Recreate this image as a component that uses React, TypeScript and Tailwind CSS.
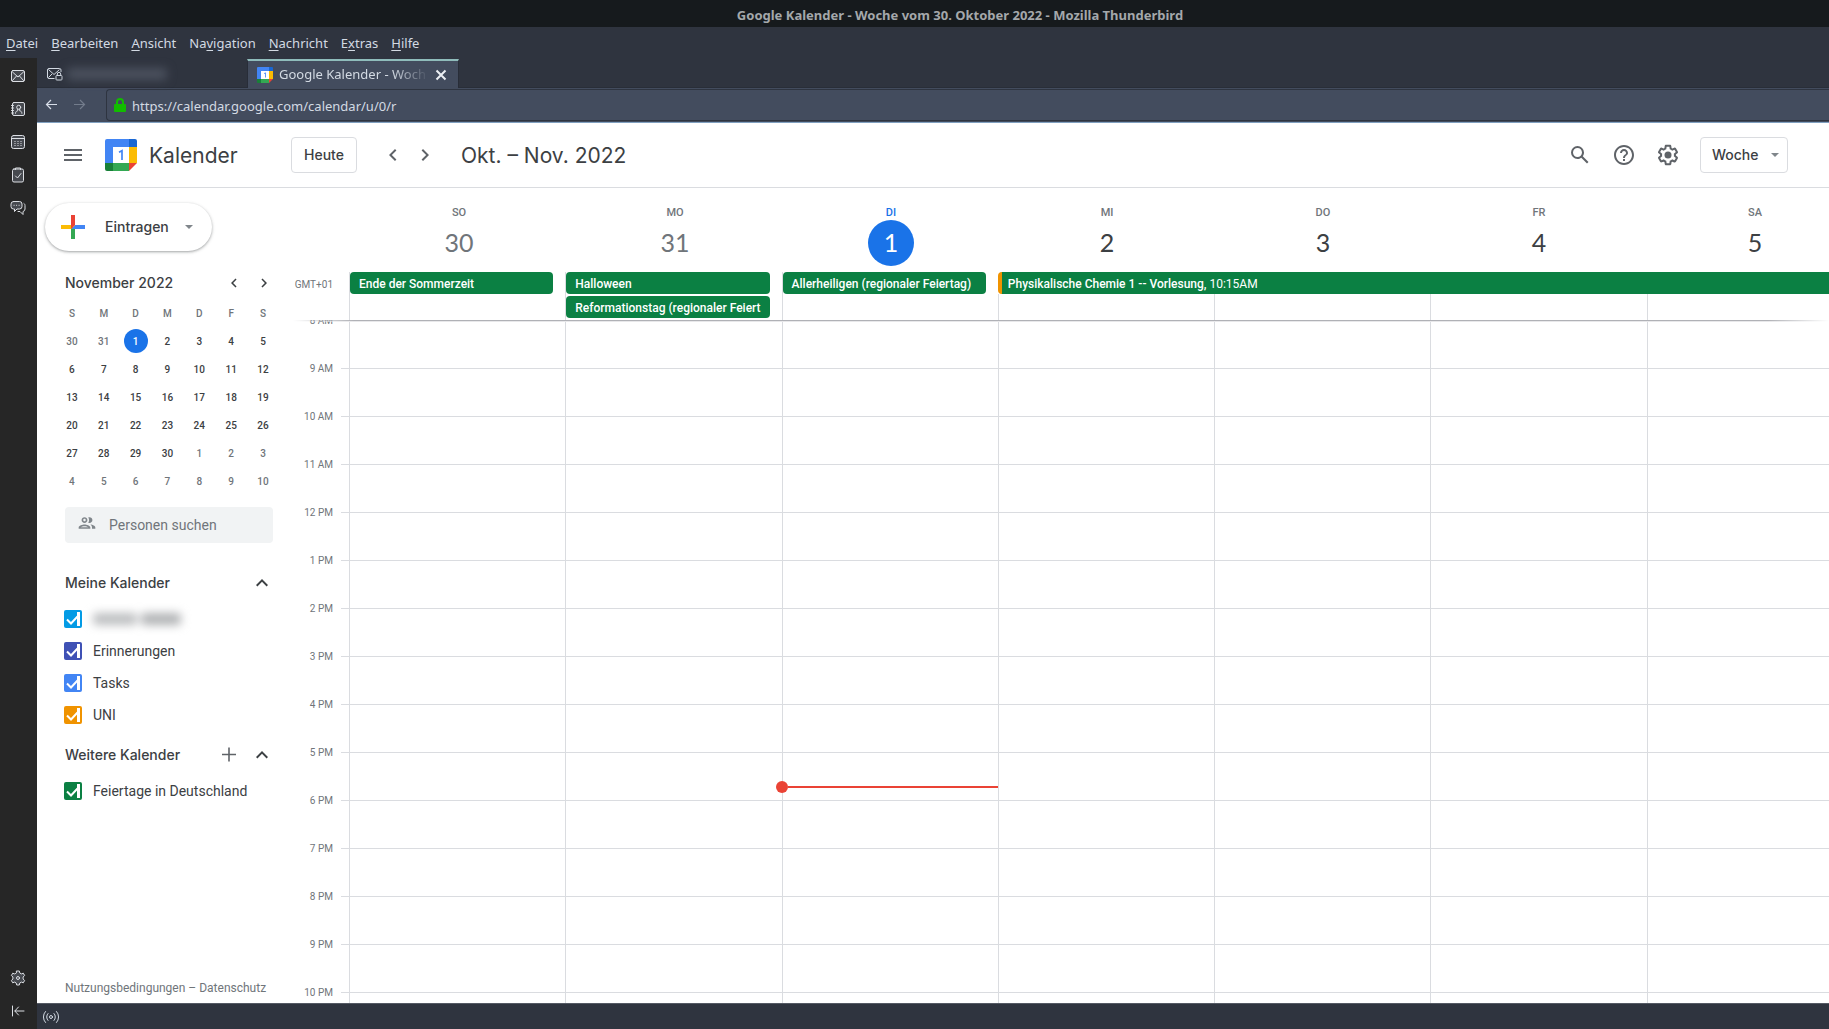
import React from "react";

const gs = "font-['Inter','Roboto',sans-serif]";

const MENU: [string, number][] = [["Datei", 0], ["Bearbeiten", 0], ["Ansicht", 0], ["Navigation", 2], ["Nachricht", 0], ["Extras", 1], ["Hilfe", 0]];

const DAYS: { name: string; date: number; state: "past" | "today" | "future" }[] = [
  { name: "SO", date: 30, state: "past" },
  { name: "MO", date: 31, state: "past" },
  { name: "DI", date: 1, state: "today" },
  { name: "MI", date: 2, state: "future" },
  { name: "DO", date: 3, state: "future" },
  { name: "FR", date: 4, state: "future" },
  { name: "SA", date: 5, state: "future" },
];

const HOURS = ["8 AM", "9 AM", "10 AM", "11 AM", "12 PM", "1 PM", "2 PM", "3 PM", "4 PM", "5 PM", "6 PM", "7 PM", "8 PM", "9 PM", "10 PM"];

const MINI = [
  [30, 31, 1, 2, 3, 4, 5],
  [6, 7, 8, 9, 10, 11, 12],
  [13, 14, 15, 16, 17, 18, 19],
  [20, 21, 22, 23, 24, 25, 26],
  [27, 28, 29, 30, 1, 2, 3],
  [4, 5, 6, 7, 8, 9, 10],
];

function CalendarLogo({ className }: { className: string }) {
  return (
    <svg viewBox="0 0 32 32" className={className} aria-hidden="true">
      <path d="M2 0h22v8H8v16H0V2a2 2 0 0 1 2-2z" fill="#4285f4" />
      <path d="M24 0h6a2 2 0 0 1 2 2v6h-8z" fill="#1967d2" />
      <path d="M24 8h8v16h-8z" fill="#fbbc04" />
      <path d="M8 24h16v8H8z" fill="#34a853" />
      <path d="M0 24h8v8H2a2 2 0 0 1-2-2z" fill="#188038" />
      <path d="M24 24h8l-8 8z" fill="#ea4335" />
      <path d="M8 8h16v16H8z" fill="#fff" />
      <path d="M14 13.200L17 11.700V21" fill="none" stroke="#4285f4" strokeWidth="1.700" />
    </svg>
  );
}

function RailIcon({ children }: { children: React.ReactNode }) {
  return (
    <svg viewBox="0 0 16 16" className="size-4 text-[#dcdfe4]" fill="none" stroke="currentColor" strokeWidth="1" strokeLinecap="round" strokeLinejoin="round" aria-hidden="true">
      {children}
    </svg>
  );
}

function Chevron({ dir, className }: { dir: "left" | "right" | "up"; className: string }) {
  const d = { left: "M15.41 7.41L14 6l-6 6 6 6 1.41-1.41L10.83 12z", right: "M10 6L8.59 7.41 13.17 12l-4.58 4.59L10 18l6-6z", up: "M12 8l-6 6 1.41 1.41L12 10.83l4.59 4.58L18 14z" }[dir];
  return (
    <svg viewBox="0 0 24 24" className={className} fill="currentColor" aria-hidden="true">
      <path d={d} />
    </svg>
  );
}

function Rail() {
  const item = "flex h-8 w-full items-center justify-center";
  return (
    <nav aria-label="Bereiche" className="flex w-[37px] shrink-0 flex-col items-center justify-between bg-[#262626] pt-0.5 pb-0.5">
      <div className="flex w-full flex-col gap-px pr-px">
        <button aria-label="E-Mail" className={item}>
          <RailIcon>
            <rect x="1.5" y="2.5" width="13" height="11" rx="1.5" fill="#46494f" />
            <path d="M2.5 4l5.5 5 5.5-5M2.5 12.5L6.5 8M13.5 12.5L9.5 8" />
          </RailIcon>
        </button>
        <button aria-label="Adressbuch" className={item}>
          <RailIcon>
            <rect x="2.5" y="1.5" width="12" height="13" rx="1.5" fill="#46494f" />
            <path d="M1.500 4.500h2M1.500 7h2M1.500 9.500h2M1.500 12h2" />
            <circle cx="8.700" cy="6.300" r="2" />
            <path d="M5.500 12.300c0-1.800 1.200-2.300 2.200-2.500V8.200M11.900 12.300c0-1.800-1.200-2.300-2.200-2.500V8.200" />
          </RailIcon>
        </button>
        <button aria-label="Kalender" className={item}>
          <RailIcon>
            <rect x="1.5" y="1.5" width="13" height="13" rx="2" fill="#46494f" />
            <path d="M2 4.500h12" />
            <path d="M4.500 7.500h1M7.500 7.500h1M10.500 7.500h1M4.500 9.500h1M7.500 9.500h1M10.500 9.500h1M4.500 11.500h1M7.500 11.500h1M10.500 11.500h1" strokeLinecap="butt" />
          </RailIcon>
        </button>
        <button aria-label="Aufgaben" className={item}>
          <RailIcon>
            <rect x="2.5" y="2" width="11" height="13" rx="1.5" fill="#46494f" />
            <path d="M5.500 2.500v-1.500h5v1.500M5.500 9l2 2 3.500-4.500" />
          </RailIcon>
        </button>
        <button aria-label="Chat" className={item}>
          <RailIcon>
            <path d="M3.500 1.500h6a2.500 2.500 0 0 1 2.500 2.500v2.500a2.500 2.500 0 0 1-2.500 2.500H7L4.500 11.500V9h-1A2.500 2.500 0 0 1 1 6.500V4a2.500 2.500 0 0 1 2.500-2.500z" fill="#46494f" />
            <path d="M14 3.500c.8.500 1 1.200 1 2v3.500a2.500 2.500 0 0 1-2 2.500v3L10 11.500H8M4 5.300h.2M6.500 5.300h.2M9 5.300h.2" />
          </RailIcon>
        </button>
      </div>
      <div className="flex w-full flex-col gap-px pr-px">
        <button aria-label="Einstellungen" className={item}>
          <RailIcon>
            <path d="M6.700 1h2.600l.5 2 1.500.9 2-.7 1.300 2.300-1.500 1.500v2l1.500 1.500-1.300 2.300-2-.7-1.500.9-.5 2H6.700l-.5-2-1.500-.9-2 .7-1.300-2.300L2.900 9V7L1.400 5.500l1.300-2.300 2 .7L6.200 3z" fill="#46494f" />
            <circle cx="8" cy="8" r="1.500" />
          </RailIcon>
        </button>
        <button aria-label="Leiste einklappen" className={item}>
          <RailIcon>
            <path d="M2.500 3v10M14 8H5M8.500 4L4.800 8l3.700 4" />
          </RailIcon>
        </button>
      </div>
    </nav>
  );
}

function TabBar() {
  return (
    <div className="flex h-[30px] items-stretch bg-[#2f343f] pt-px text-[13px] text-[#d3dae3]" role="tablist">
      <button role="tab" aria-selected="false" aria-label="Posteingang" className="flex w-[210px] items-center gap-1 border-b border-[#292e38] pt-0.5 pl-2.5">
        <svg viewBox="0 0 16 16" className="size-4 shrink-0" fill="none" stroke="#d3dae3" strokeWidth="1" strokeLinejoin="round" aria-hidden="true">
          <path d="M7.500 12.500H2A1.500 1.500 0 0 1 .5 11V4A1.500 1.500 0 0 1 2 2.500h10.500A1.500 1.500 0 0 1 14 4v2M1.500 3.500l5.500 5 5.500-5M1.500 11.500L5 8" />
          <rect x="9" y="9.500" width="6" height="4.500" rx=".8" fill="#2f343f" />
          <path d="M10.300 9.500V8a1.700 1.700 0 0 1 3.400 0v1.500" />
        </svg>
        <span className="h-3 w-[100px] rounded bg-[#4b515e] blur-[5px]" />
      </button>
      <div className="flex w-[212px] items-center border-x border-t-2 border-[#282d38] border-t-[#8fbcbb] bg-[#434c5e] pr-[5px] pl-[9px]">
        <button role="tab" aria-selected="true" className="flex min-w-0 flex-1 items-center gap-1.5">
          <CalendarLogo className="size-4 shrink-0" />
          <span className="flex-1 mask-r-from-75% text-left whitespace-nowrap">Google Kalender - Woch</span>
        </button>
        <button aria-label="Tab schließen" className="flex size-6 items-center justify-center">
          <svg viewBox="0 0 16 16" className="size-4" stroke="#eceff4" strokeWidth="2" aria-hidden="true">
            <path d="M3.500 3.500l9 9M12.500 3.500l-9 9" />
          </svg>
        </button>
      </div>
      <div className="flex-1 border-b border-[#292e38]" />
    </div>
  );
}

function NavBar() {
  return (
    <div className="flex h-[35px] items-center border-b border-[#81a1c1] bg-[#434c5e] pl-2">
      <button aria-label="Zurück" className="mr-3 text-[#d8dee9]">
        <svg viewBox="0 0 16 16" className="size-4" fill="none" stroke="currentColor" strokeWidth="1.200" aria-hidden="true"><path d="M12 7.500H1.500M6 3L1.500 7.500 6 12" /></svg>
      </button>
      <button aria-label="Vor" className="text-[#737c8c]">
        <svg viewBox="0 0 16 16" className="size-4" fill="none" stroke="currentColor" strokeWidth="1.200" aria-hidden="true"><path d="M1 7.500h10.500M7 3l4.500 4.500L7 12" /></svg>
      </button>
      <label className="ml-[17px] flex h-8 flex-1 items-center gap-1.5 rounded-l border border-r-0 border-[#2e3440] pl-[7px]">
        <svg viewBox="0 0 12 14" className="h-3.5 w-3 shrink-0" aria-hidden="true">
          <path d="M3 6V4a3 3 0 0 1 6 0v2" fill="none" stroke="#12bc00" strokeWidth="2" />
          <rect x="0" y="6" width="12" height="8" rx="1" fill="#12bc00" />
        </svg>
        <input aria-label="Adresse" className="flex-1 bg-transparent pt-1 text-[13px] text-[#d3dae3] outline-none" defaultValue="https://calendar.google.com/calendar/u/0/r" />
      </label>
    </div>
  );
}

function AppHeader() {
  return (
    <header className={`flex h-[65px] shrink-0 items-center border-b border-[#dadce0] pr-[41px] pl-6 text-[#3c4043] ${gs}`}>
      <button aria-label="Hauptmenü" className="text-[#5f6368]">
        <svg viewBox="0 0 24 24" className="size-6" fill="currentColor" aria-hidden="true"><path d="M3 18h18v-2H3v2zm0-5h18v-2H3v2zm0-7v2h18V6H3z" /></svg>
      </button>
      <CalendarLogo className="ml-5 size-8" />
      <span className="ml-3 w-[142px] pt-0.5 text-[21px]">Kalender</span>
      <button className="h-9 w-[66px] rounded border border-[#dadce0] text-sm font-medium">Heute</button>
      <button aria-label="Vorherige Woche" className="ml-6 text-[#5f6368]"><Chevron dir="left" className="size-6" /></button>
      <button aria-label="Nächste Woche" className="ml-2 text-[#5f6368]"><Chevron dir="right" className="size-6" /></button>
      <h1 className="ml-6 flex-1 pt-0.5 text-[21px]">Okt. – Nov. 2022</h1>
      <div className="flex items-center gap-5 text-[#5f6368]">
        <button aria-label="Suchen">
          <svg viewBox="0 0 24 24" className="size-6" fill="currentColor" aria-hidden="true"><path d="M20.490 19l-5.730-5.730C15.530 12.200 16 10.910 16 9.500A6.500 6.500 0 1 0 9.500 16c1.410 0 2.700-.47 3.770-1.240L19 20.490 20.490 19zM5 9.500C5 7.010 7.010 5 9.500 5S14 7.010 14 9.500 11.990 14 9.500 14 5 11.990 5 9.500z" /></svg>
        </button>
        <button aria-label="Hilfe">
          <svg viewBox="0 0 24 24" className="size-6" fill="currentColor" aria-hidden="true"><path d="M11 18h2v-2h-2v2zm1-16C6.480 2 2 6.480 2 12s4.480 10 10 10 10-4.480 10-10S17.520 2 12 2zm0 18c-4.410 0-8-3.590-8-8s3.590-8 8-8 8 3.590 8 8-3.590 8-8 8zm0-14c-2.210 0-4 1.790-4 4h2c0-1.100.9-2 2-2s2 .9 2 2c0 2-3 1.750-3 5h2c0-2.250 3-2.500 3-5 0-2.210-1.790-4-4-4z" /></svg>
        </button>
        <button aria-label="Einstellungen">
          <svg viewBox="0 0 24 24" className="size-6" fill="currentColor" aria-hidden="true">
            <path d="M13.850 22.250h-3.700c-.74 0-1.360-.54-1.450-1.270l-.27-1.890c-.27-.14-.53-.29-.79-.46l-1.800.72c-.7.26-1.470-.03-1.810-.65L2.200 15.530c-.35-.66-.2-1.440.36-1.880l1.530-1.190c-.01-.15-.02-.3-.02-.46 0-.15.010-.31.020-.46l-1.520-1.190c-.59-.45-.74-1.260-.37-1.880l1.850-3.190c.34-.62 1.110-.9 1.790-.63l1.810.73c.26-.17.52-.32.780-.46l.27-1.910c.09-.7.710-1.250 1.440-1.250h3.700c.74 0 1.360.54 1.450 1.270l.27 1.890c.27.140.53.290.79.460l1.800-.72c.71-.26 1.480.03 1.820.65l1.840 3.180c.36.660.2 1.440-.36 1.880l-1.520 1.190c.01.150.02.3.02.460s-.01.310-.02.460l1.520 1.190c.56.450.72 1.230.37 1.860l-1.860 3.220c-.34.620-1.110.9-1.800.630l-1.800-.72c-.26.170-.52.320-.78.460l-.27 1.910c-.1.680-.72 1.220-1.460 1.220zm-3.230-2h2.760l.37-2.550.53-.22c.44-.18.88-.44 1.340-.78l.45-.34 2.380.96 1.380-2.400-2.030-1.580.07-.56c.03-.26.060-.51.060-.78s-.03-.53-.06-.78l-.07-.56 2.030-1.580-1.390-2.400-2.390.96-.45-.35c-.42-.32-.87-.58-1.330-.77l-.52-.22-.37-2.550h-2.760l-.37 2.550-.53.210c-.44.190-.88.440-1.340.790l-.45.330-2.380-.95-1.390 2.390 2.030 1.580-.07.560a7 7 0 0 0-.06.790c0 .26.020.530.060.780l.07.560-2.030 1.580 1.380 2.400 2.390-.96.450.350c.43.330.86.580 1.330.770l.53.220.380 2.550z" />
            <circle cx="12" cy="12" r="3.500" />
          </svg>
        </button>
        <button className="flex h-9 w-[88px] items-center justify-between rounded border border-[#dadce0] pr-2 pl-[11px] text-sm font-medium text-[#3c4043]">
          Woche
          <svg viewBox="0 0 8 4" className="h-1 w-2" fill="#80868b" aria-hidden="true"><path d="M0 0h8L4 4z" /></svg>
        </button>
      </div>
    </header>
  );
}

function CalendarCheck({ label, box }: { label: string; box: string }) {
  return (
    <label className="flex h-8 items-center gap-[11px] text-sm text-[#3c4043]">
      <span className="relative size-[18px]">
        <input type="checkbox" defaultChecked aria-label={label || "Eigener Kalender"} className={`block size-[18px] appearance-none rounded-xs ${box}`} />
        <svg viewBox="0 0 18 18" className="pointer-events-none absolute inset-0 size-[18px]" fill="none" stroke="#fff" strokeWidth="2" aria-hidden="true">
          <path d="M3 9.500l4 4L13.500 6.500" />
          <path d="M14.500 2v14" strokeWidth="3" />
        </svg>
      </span>
      {label ? (
        <span>{label}</span>
      ) : (
        <span className="flex gap-1 blur-[5px]">
          <span className="h-3 w-11 rounded bg-[#bcbec0]" />
          <span className="h-3 w-10 rounded bg-[#b0b2b4]" />
        </span>
      )}
    </label>
  );
}

function Sidebar() {
  return (
    <aside className="flex w-[246px] shrink-0 flex-col pt-[15px] pl-2">
      <button className={`flex h-12 w-[167px] shrink-0 items-center rounded-full bg-white pl-3 text-sm font-medium text-[#3c4043] shadow-[0_1px_2px_rgba(60,64,67,0.3),0_1px_3px_1px_rgba(60,64,67,0.15)] ${gs}`}>
        <svg viewBox="0 0 36 36" className="-ml-0.5 size-9" aria-hidden="true">
          <path fill="#34A853" d="M16 16v14h4V20z" />
          <path fill="#4285F4" d="M30 16H20l-4 4h14z" />
          <path fill="#FBBC05" d="M6 16v4h10l4-4z" />
          <path fill="#EA4335" d="M20 16V6h-4v14z" />
        </svg>
        <span className="ml-3.5">Eintragen</span>
        <svg viewBox="0 0 8 4" className="ml-4 h-1 w-2" fill="#80868b" aria-hidden="true"><path d="M0 0h8L4 4z" /></svg>
      </button>

      <div className={`mt-4 flex h-8 items-center pl-5 text-[#3c4043] ${gs}`}>
        <span className="flex-1 text-sm font-medium">November 2022</span>
        <button aria-label="Vorheriger Monat" className="mr-3"><Chevron dir="left" className="size-[18px]" /></button>
        <button aria-label="Nächster Monat" className="mr-2.5"><Chevron dir="right" className="size-[18px]" /></button>
      </div>

      <table className="ml-[11px] w-[223px] table-fixed text-center text-[10px] font-medium text-[#3c4043]">
        <thead>
          <tr className="h-7 text-[#70757a]">
            {["S", "M", "D", "M", "D", "F", "S"].map((d, i) => (
              <th key={i} className="p-0 font-medium">{d}</th>
            ))}
          </tr>
        </thead>
        <tbody>
          {MINI.map((week, w) => (
            <tr key={w} className="h-7">
              {week.map((d, i) => {
                const muted = (w === 0 && i < 2) || (w === 4 && i > 3) || w === 5;
                const today = w === 0 && i === 2;
                return (
                  <td key={i} className="p-0">
                    <button className={`mx-auto flex size-6 items-center justify-center rounded-full ${today ? "bg-[#1a73e8] text-white" : muted ? "text-[#70757a]" : ""}`}>{d}</button>
                  </td>
                );
              })}
            </tr>
          ))}
        </tbody>
      </table>

      <label className="mt-3 mr-2.5 ml-5 flex h-9 items-center gap-3 rounded bg-[#f1f3f4] pl-3">
        <svg viewBox="0 0 24 24" className="mb-1 size-5 shrink-0" fill="#80868b" aria-hidden="true">
          <path d="M9 13.750c-2.340 0-7 1.170-7 3.500V19h14v-1.750c0-2.330-4.660-3.500-7-3.500zM4.340 17c.84-.58 2.870-1.250 4.660-1.250s3.820.67 4.660 1.250H4.340zM9 12c1.930 0 3.500-1.570 3.500-3.500S10.930 5 9 5 5.500 6.570 5.500 8.500 7.070 12 9 12zm0-5c.83 0 1.500.67 1.500 1.500S9.830 10 9 10s-1.500-.67-1.500-1.500S8.170 7 9 7zm7.040 6.810c1.160.84 1.960 1.960 1.960 3.440V19h4v-1.750c0-2.020-3.500-3.170-5.960-3.440zM15 12c1.930 0 3.500-1.570 3.500-3.500S16.930 5 15 5c-.54 0-1.040.130-1.500.350.63.890 1 1.980 1 3.150s-.37 2.260-1 3.150c.46.220.96.350 1.500.350z" />
        </svg>
        <input aria-label="Personen suchen" placeholder="Personen suchen" className="w-full min-w-0 bg-transparent text-sm outline-none placeholder:text-[#70757a]" />
      </label>

      <div className={`mt-6 flex h-8 items-center pl-5 text-sm font-medium text-[#3c4043] ${gs}`}>
        <h2 className="flex-1">Meine Kalender</h2>
        <button aria-label="Meine Kalender einklappen" className="mr-[9px]"><Chevron dir="up" className="size-6" /></button>
      </div>
      <div className="mt-1 pl-[19px]">
        <CalendarCheck label="" box="bg-[#039be5]" />
        <CalendarCheck label="Erinnerungen" box="bg-[#3f51b5]" />
        <CalendarCheck label="Tasks" box="bg-[#4285f4]" />
        <CalendarCheck label="UNI" box="bg-[#f09300]" />
      </div>
      <div className={`mt-2 flex h-8 items-center pl-5 text-sm font-medium text-[#3c4043] ${gs}`}>
        <h2 className="flex-1">Weitere Kalender</h2>
        <button aria-label="Kalender hinzufügen" className="mr-[9px]">
          <svg viewBox="0 0 24 24" className="size-6" stroke="#5f6368" strokeWidth="1.600" aria-hidden="true"><path d="M5 11.500h14M12 4.500v14" /></svg>
        </button>
        <button aria-label="Weitere Kalender einklappen" className="mr-[9px]"><Chevron dir="up" className="size-6" /></button>
      </div>
      <div className="mt-1 pl-[19px]">
        <CalendarCheck label="Feiertage in Deutschland" box="bg-[#0b8043]" />
      </div>
      <p className="mt-auto pb-[7px] pl-5 text-xs text-[#70757a]">
        <a href="#terms">Nutzungsbedingungen</a> – <a href="#privacy">Datenschutz</a>
      </p>
    </aside>
  );
}

function DayEvents({ titles }: { titles: string[] }) {
  return (
    <div className="grid content-start gap-0.5 border-l border-[#dadce0] pr-3">
      {titles.map((t) => (
        <button key={t} className="h-[22px] rounded bg-[#0b8043] pt-px pr-2 pl-[9px] text-left text-xs font-medium whitespace-nowrap text-white">
          {t}
        </button>
      ))}
    </div>
  );
}

function WeekView() {
  return (
    <main className="flex min-w-0 flex-1 flex-col overflow-hidden">
      <div className="-mr-[34px] flex shrink-0">
        <div className="flex w-[66px] shrink-0 flex-col items-end pt-[89px] pr-4 text-[10px] leading-4 text-[#70757a]">GMT+01</div>
        <div className="flex-1">
          <div className="grid grid-cols-7 pl-0.5">
            {DAYS.map((d) => (
              <div key={d.name} className={`flex h-[84px] flex-col items-center pt-[18px] ${d.state === "future" ? "text-[#3c4043]" : "text-[#70757a]"}`}>
                <span className={`text-[11px] leading-[14px] font-medium ${d.state === "today" ? "text-[#1a73e8]" : "text-[#70757a]"}`}>{d.name}</span>
                <button className={`flex size-[46px] items-center justify-center rounded-full font-['Lato','Roboto',sans-serif] text-[25px] ${d.state === "today" ? "bg-[#1a73e8] text-white" : ""}`}>{d.date}</button>
              </div>
            ))}
          </div>
          <div className="grid h-12 grid-cols-7">
            <DayEvents titles={["Ende der Sommerzeit"]} />
            <DayEvents titles={["Halloween", "Reformationstag (regionaler Feiert"]} />
            <DayEvents titles={["Allerheiligen (regionaler Feiertag)"]} />
            <div className="col-span-4 grid grid-cols-4 grid-rows-[22px_26px]">
              <button className="col-span-4 rounded-l border-l-4 border-[#f09300] bg-[#0b8043] pt-px pl-1.5 text-left text-xs whitespace-nowrap text-white">
                <span className="font-medium">Physikalische Chemie 1 -- Vorlesung,</span> 10:15AM
              </button>
              {[0, 1, 2, 3].map((i) => <div key={i} className="border-l border-[#dadce0]" />)}
            </div>
          </div>
        </div>
      </div>

      <div className="relative -mr-[34px] flex min-h-0 flex-1 overflow-hidden">
        <div className="pointer-events-none absolute inset-x-0 top-0 z-10 mr-[34px] ml-2.5 h-0.5 border-t border-[#b0b1b6] bg-[#e8e8ea] mask-x-from-96% mask-x-to-100%" />
        <div className="w-[66px] shrink-0">
          {HOURS.map((h, i) => (
            <div key={i} className="flex h-12">
              <span className="-mt-2 flex-1 text-right text-[10px] leading-[17px] text-[#70757a]">{h}</span>
              <span className={`ml-2 w-2 border-t ${i === 0 ? "border-transparent" : "border-[#dadce0]"}`} />
            </div>
          ))}
        </div>
        <div className="grid flex-1 grid-cols-7">
          {DAYS.map((d) => (
            <div key={d.name} className="relative border-l border-[#dadce0]">
              {HOURS.map((h, i) => <div key={i} className="h-12 border-t border-[#dadce0] first:border-transparent" />)}
              {d.state === "today" && (
                <div className="absolute top-[461px] right-0 -left-[7px] flex items-center">
                  <span className="size-3 rounded-full bg-[#ea4335]" />
                  <span className="h-0.5 flex-1 bg-[#ea4335]" />
                </div>
              )}
            </div>
          ))}
        </div>
      </div>
    </main>
  );
}

export default function App() {
  return (
    <div className="flex h-screen flex-col overflow-hidden bg-[#2f343f] font-['Noto_Sans',sans-serif]">
      <div className="flex h-[27px] shrink-0 items-center justify-center bg-[#161a1d] pt-1 pl-[91px] text-[13px] font-bold text-[#a4a8ab]">Google Kalender - Woche vom 30. Oktober 2022 - Mozilla Thunderbird</div>
      <nav aria-label="Menü" className="flex h-[31px] shrink-0 items-center gap-[13px] pt-0.5 pl-1.5 text-[13px] text-[#d3dae3]">
        {MENU.map(([m, k]) => (
          <button key={m}>
            {m.slice(0, k)}<span className="underline underline-offset-2">{m[k]}</span>{m.slice(k + 1)}
          </button>
        ))}
      </nav>
      <div className="flex min-h-0 flex-1">
        <Rail />
        <div className="flex min-w-0 flex-1 flex-col">
          <TabBar />
          <NavBar />
          <div className="flex min-h-0 flex-1 flex-col bg-white font-['Roboto',sans-serif]">
            <AppHeader />
            <div className="flex min-h-0 flex-1">
              <Sidebar />
              <WeekView />
            </div>
          </div>
          <footer className="flex h-[26px] shrink-0 items-center border-t border-[#555a64] bg-[#2f343f] pl-1.5">
            <svg viewBox="0 0 16 16" className="size-4" fill="none" stroke="#d3dae3" strokeWidth="1" strokeLinecap="round" aria-hidden="true">
              <circle cx="8" cy="8" r="1.500" />
              <path d="M5 4.500a5 5 0 0 0 0 7M11 4.500a5 5 0 0 1 0 7M2.500 2.500a8 8 0 0 0 0 11M13.500 2.500a8 8 0 0 1 0 11" />
            </svg>
          </footer>
        </div>
      </div>
    </div>
  );
}
